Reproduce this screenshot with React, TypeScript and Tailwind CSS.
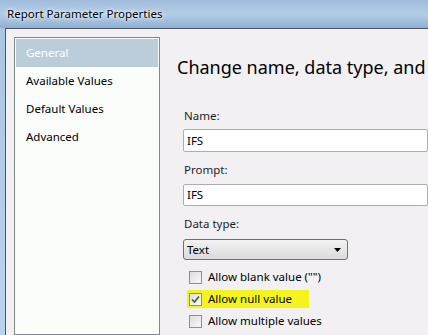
import React from "react";

const font = { fontFamily: '"Noto Sans", "Segoe UI", sans-serif' };

function CheckBox({ checked }: { checked?: boolean }) {
  return (
    <span className="flex h-[13px] w-[13px] shrink-0 items-center justify-center border border-[#8f8f8f] bg-gradient-to-br from-[#dedede] to-[#f8f8f8]">
      {checked && (
        <svg width="9" height="9" viewBox="0 0 9 9">
          <path d="M1 4.5 L3.5 7 L8 1.5" fill="none" stroke="#4a5d2a" strokeWidth="1.6" />
        </svg>
      )}
    </span>
  );
}

function Option({ label, checked, highlight }: { label: string; checked?: boolean; highlight?: boolean }) {
  return (
    <div
      className={`flex h-[18px] items-center gap-[6px] pl-[2px] whitespace-nowrap ${
        highlight ? "w-[122px] bg-[#f4f41c]" : "w-[200px]"
      }`}
    >
      <CheckBox checked={checked} />
      <span className="text-[11.5px] text-black">{label}</span>
    </div>
  );
}

export default function App() {
  return (
    <div className="h-[335px] w-[428px] overflow-hidden bg-[#f2f0f3]" style={font}>
      {/* title bar */}
      <div className="flex h-[28px] items-center bg-gradient-to-b from-[#9fbcdb] via-[#b3cde6] to-[#8fb0d2] pl-[7px]">
        <span className="text-[11.5px] text-black" style={{ textShadow: "0 0 6px #fff, 0 0 3px #fff" }}>
          Report Parameter Properties
        </span>
      </div>
      <div className="flex h-[307px]">
        <div className="w-[5px] shrink-0 bg-gradient-to-b from-[#a9c6e3] to-[#b9d5ee]" />
        <div className="flex min-w-0 flex-1 border-l border-t border-[#4e5560]">
          {/* nav panel */}
          <div className="ml-[8px] mt-[8px] flex w-[146px] shrink-0 flex-col border border-[#828790] bg-[#fbfdfb] p-[1px] text-[11.5px]">
            <div className="flex h-[28px] items-center bg-[#bccdda] pl-[10px] text-white">General</div>
            <div className="flex h-[28px] items-center pl-[10px] text-black">Available Values</div>
            <div className="flex h-[28px] items-center pl-[10px] text-black">Default Values</div>
            <div className="flex h-[28px] items-center pl-[10px] text-black">Advanced</div>
          </div>
          {/* content */}
          <div className="flex min-w-0 flex-1 flex-col pl-[17px] pt-[25px] whitespace-nowrap">
            <div className="text-[18px] leading-[26px] text-black">Change name, data type, and</div>
            <div className="pl-[7px] pt-[28px]">
              <div className="text-[11.5px] leading-[16px] text-[#1e1e1e]">Name:</div>
              <div className="mt-[5px] ml-[-1px] flex h-[23px] items-center rounded-[2px] border border-[#abadb3] bg-white pl-[3px] text-[11.5px]">
                IFS
              </div>
              <div className="mt-[10px] text-[11.5px] leading-[16px] text-[#1e1e1e]">Prompt:</div>
              <div className="mt-[6px] ml-[-1px] flex h-[22px] items-center rounded-[2px] border border-[#abadb3] bg-white pl-[3px] text-[11.5px]">
                IFS
              </div>
              <div className="mt-[10px] text-[11.5px] leading-[16px] text-[#1e1e1e]">Data type:</div>
              <div className="mt-[7px] ml-[-1px] flex h-[21px] w-[165px] items-center justify-between rounded-[3px] border border-[#707070] bg-gradient-to-b from-[#f3f3f3] to-[#dadada] pl-[3px] pr-[6px] text-[11.5px]">
                <span>Text</span>
                <svg width="7" height="4" viewBox="0 0 7 4">
                  <path d="M0 0 H7 L3.5 4 Z" fill="#000" />
                </svg>
              </div>
              <div className="mt-[8px] flex flex-col gap-[4px] pl-[3px]">
                <Option label={'Allow blank value ("")'} />
                <Option label="Allow null value" checked highlight />
                <Option label="Allow multiple values" />
              </div>
            </div>
          </div>
        </div>
      </div>
    </div>
  );
}
